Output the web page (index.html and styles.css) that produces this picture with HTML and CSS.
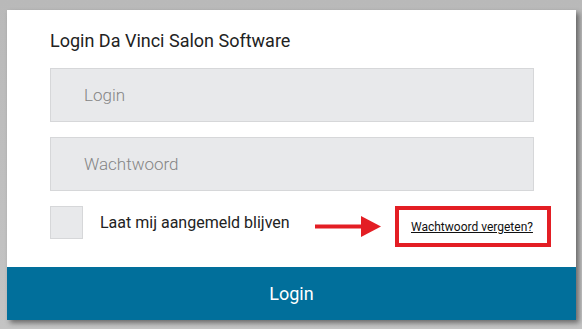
FILE: index.html
```html
<!DOCTYPE html>
<html lang="nl">
<head>
    <meta charset="UTF-8">
    <meta name="viewport" content="width=device-width, initial-scale=1.0">
    <title>Login Da Vinci Salon Software</title>
    <link rel="stylesheet" href="styles.css">
</head>
<body>
    <div class="card">
        <form class="card-body" id="loginForm">
            <h1>Login Da Vinci Salon Software</h1>

            <input type="text" class="field" placeholder="Login">
            <input type="password" class="field" placeholder="Wachtwoord">

            <div class="remember-row">
                <label class="remember">
                    <span class="check"></span>
                    <span>Laat mij aangemeld blijven</span>
                </label>

                <div class="hint">
                    <svg class="arrow" width="66" height="21" viewBox="0 0 66 21">
                        <rect x="0" y="8.5" width="48" height="4" fill="#e31e24"/>
                        <polygon points="46,0 66,10.5 46,21" fill="#e31e24"/>
                    </svg>
                    <div class="hint-box">
                        <a href="#" class="forgot">Wachtwoord vergeten?</a>
                    </div>
                </div>
            </div>
        </form>
        <button type="submit" form="loginForm" class="login-btn">Login</button>
    </div>
</body>
</html>
```

FILE: styles.css
```css
body {
    margin: 0;
    font-family: Roboto, "Liberation Sans", sans-serif;
    background-color: #bcbcbc;
    background-image: linear-gradient(to bottom, #b9b9b9, #c4c4c4);
    height: 329px;
    overflow: hidden;
}

.card {
    width: 569px;
    height: 310px;
    margin: 10px 0 0 7px;
    background-color: white;
    display: flex;
    flex-direction: column;
    box-shadow: 3px 3px 5px rgba(0, 0, 0, 0.45);
}

.card-body {
    flex: 1;
    padding: 19px 42px 0 43px;
    display: flex;
    flex-direction: column;
}

h1 {
    margin: 0 0 15px 0;
    font-size: 18px;
    line-height: 24px;
    font-weight: 400;
    color: #222;
}

.field {
    box-sizing: border-box;
    height: 54px;
    width: 100%;
    margin-bottom: 15px;
    padding: 0 33px;
    border: 1px solid #d6d7d9;
    background-color: #e8e9eb;
    font-family: inherit;
    font-size: 17px;
    font-weight: 300;
    color: #333;
    outline: none;
}

.field::placeholder {
    color: #858585;
}

.remember-row {
    display: flex;
    align-items: flex-start;
}

.remember {
    display: flex;
    align-items: center;
    gap: 17px;
    font-size: 16px;
    color: #222;
}

.check {
    box-sizing: border-box;
    width: 33px;
    height: 33px;
    border: 1px solid #d6d7d9;
    background-color: #e8e9eb;
}

.hint {
    margin-left: auto;
    margin-right: -17px;
    display: flex;
    align-items: center;
    gap: 14px;
}

.arrow {
    display: block;
}

.hint-box {
    box-sizing: border-box;
    width: 156px;
    height: 41px;
    border: 4px solid #e31e24;
    padding-left: 12px;
    display: flex;
    align-items: center;
}

.forgot {
    font-size: 12px;
    color: #111;
    text-decoration: underline;
}

.login-btn {
    height: 53px;
    border: none;
    background-color: #016f9b;
    color: white;
    font-family: inherit;
    font-size: 18px;
    cursor: pointer;
}
```
